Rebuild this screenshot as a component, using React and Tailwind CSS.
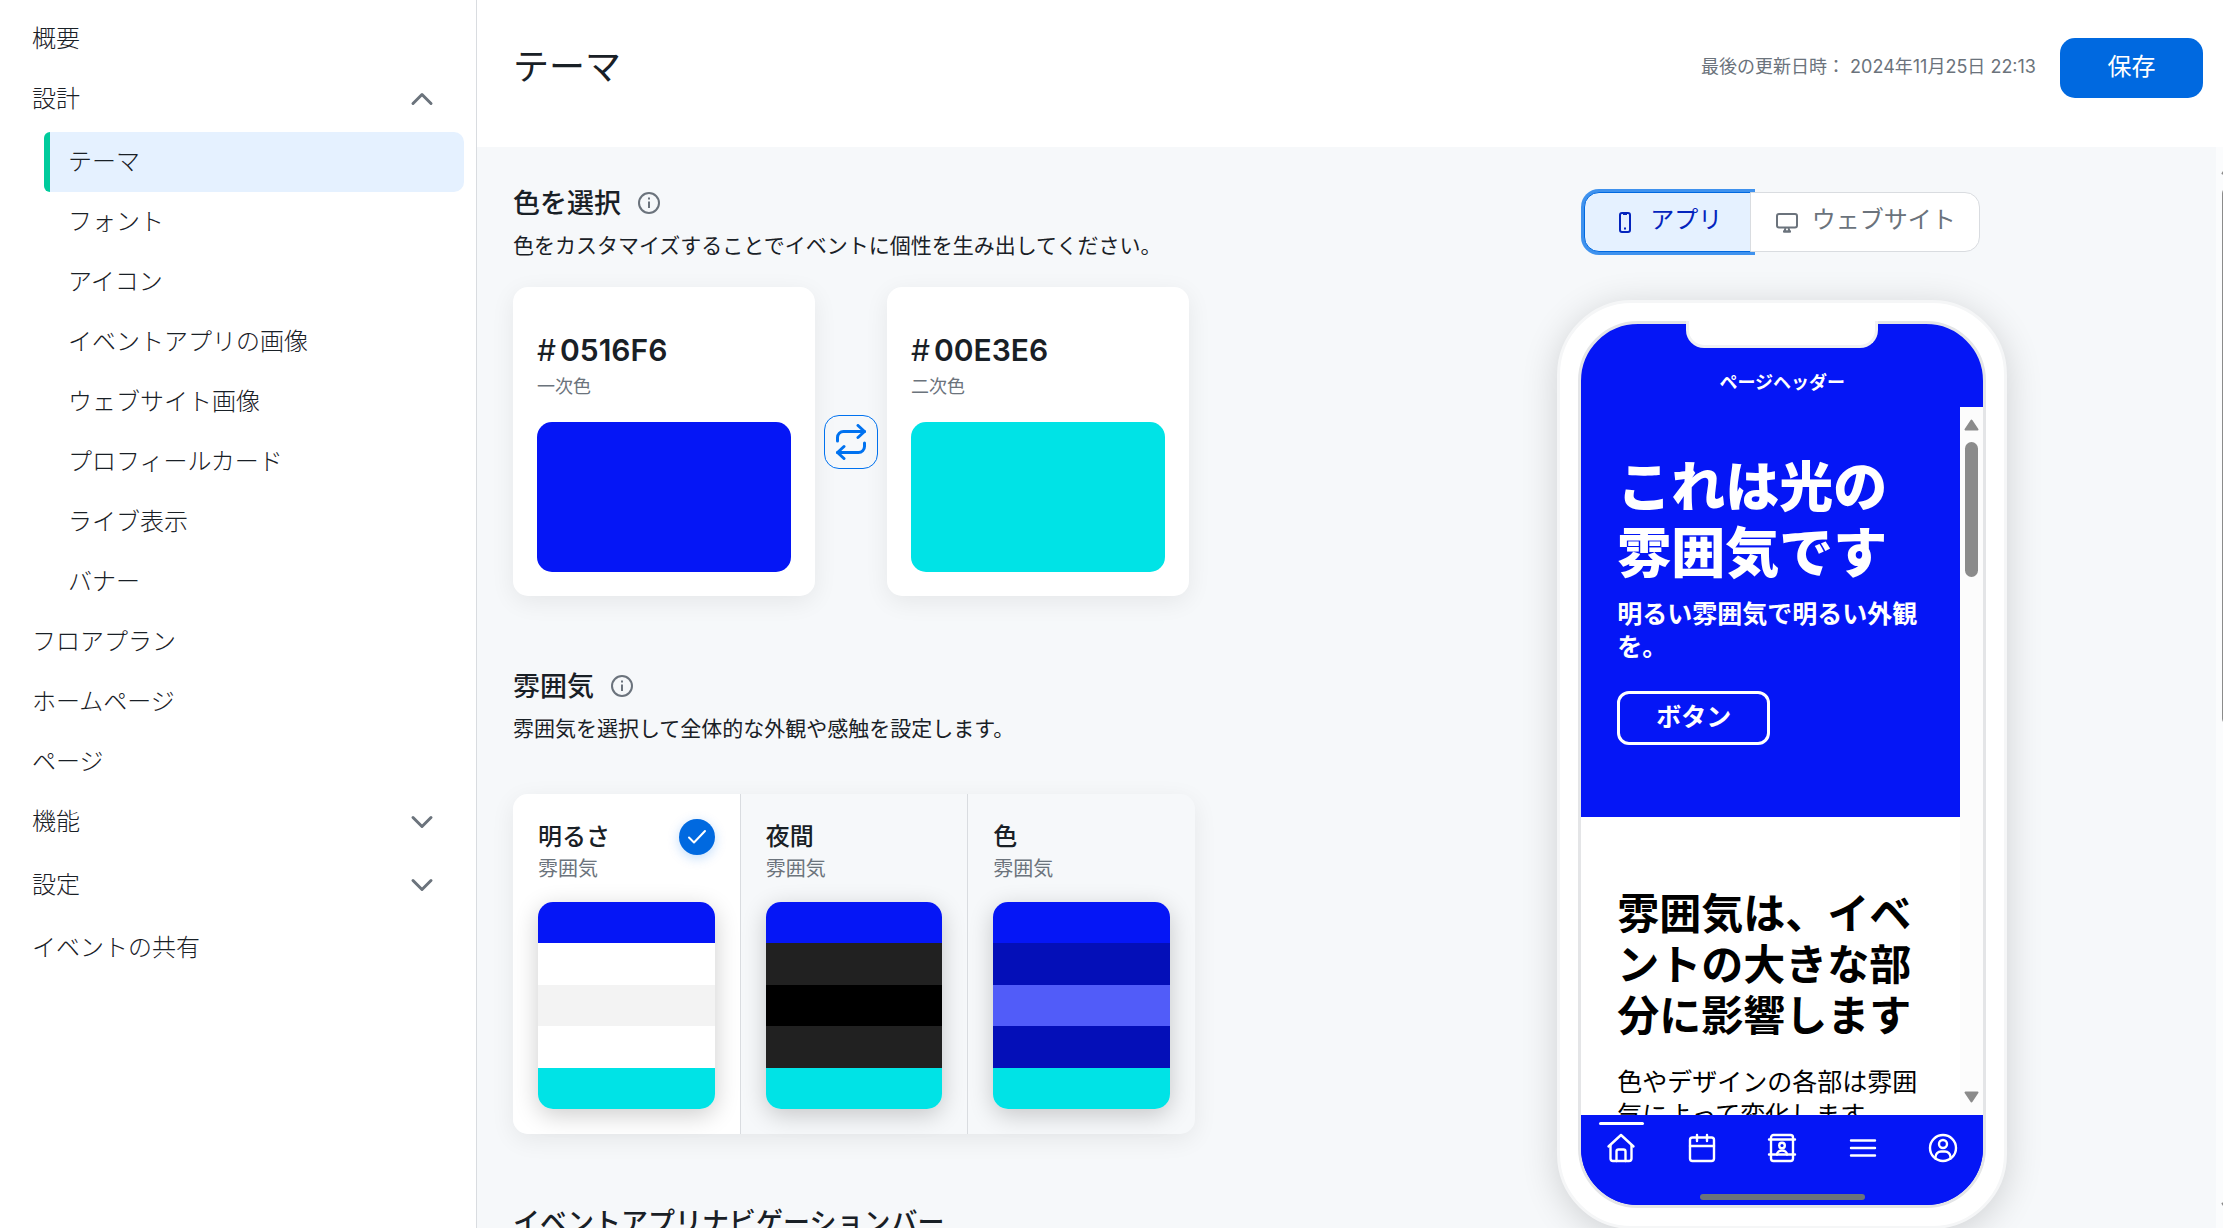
import React from "react";

const jp = "font-['Noto_Sans','Noto_Sans_CJK_JP',sans-serif]";

function Chevron({ up = false }) {
  return (
    <svg width="24" height="16" viewBox="0 0 24 16" fill="none" stroke="#6b737c" strokeWidth="3" strokeLinecap="round" strokeLinejoin="round" aria-hidden="true">
      <path d={up ? "M3 12.5 12 3.5l9 9" : "M3 3.5l9 9 9-9"} />
    </svg>
  );
}

function InfoIcon() {
  return (
    <svg width="24" height="24" viewBox="0 0 24 24" fill="none" stroke="#6b737c" strokeWidth="2" aria-hidden="true">
      <circle cx="12" cy="12" r="10" />
      <path d="M12 10.5v6.5" />
      <path d="M12 6.5v2" />
    </svg>
  );
}

function SwapIcon() {
  return (
    <svg width="34" height="36" viewBox="0 0 34 36" fill="none" stroke="#0072f0" strokeWidth="3" strokeLinecap="round" strokeLinejoin="round" aria-hidden="true">
      <path d="M3.5 17v-3.5a6 6 0 0 1 6-6h21" />
      <path d="M24 1.500l6.500 6-6.500 6" />
      <path d="M30.5 19v3.500a6 6 0 0 1-6 6h-21" />
      <path d="M10 22.500l-6.500 6 6.500 6" />
    </svg>
  );
}

const navStroke = { fill: "none", stroke: "#fff", strokeWidth: 2.4, strokeLinecap: "round", strokeLinejoin: "round" };

function HomeIcon() {
  return (
    <svg width="30" height="30" viewBox="0 0 30 30" {...navStroke} aria-hidden="true">
      <path d="M2.5 13.500 15 2l12.500 11.500" />
      <path d="M4.500 12v13.500a2.500 2.500 0 0 0 2.500 2.500h16a2.500 2.500 0 0 0 2.500-2.500V12" />
      <path d="M10.500 28v-9.500a2 2 0 0 1 2-2h5a2 2 0 0 1 2 2V28" />
    </svg>
  );
}

function CalendarIcon() {
  return (
    <svg width="30" height="30" viewBox="0 0 30 30" {...navStroke} aria-hidden="true">
      <rect x="3" y="4.5" width="24" height="23.5" rx="2.5" />
      <path d="M3 13h24M10 2v6M20 2v6" />
    </svg>
  );
}

function ContactIcon() {
  return (
    <svg width="30" height="30" viewBox="0 0 30 30" {...navStroke} aria-hidden="true">
      <rect x="4" y="2" width="22" height="26" rx="2.5" />
      <path d="M2 6.500h26M2 21.500h26" />
      <circle cx="15" cy="12.5" r="2.8" />
      <path d="M10 21.500a5 4 0 0 1 10 0" />
    </svg>
  );
}

function MenuIcon() {
  return (
    <svg width="30" height="30" viewBox="0 0 30 30" {...navStroke} aria-hidden="true">
      <path d="M3 7.500h24M3 15h24M3 22.500h24" />
    </svg>
  );
}

function ProfileIcon() {
  return (
    <svg width="30" height="30" viewBox="0 0 30 30" {...navStroke} aria-hidden="true">
      <circle cx="15" cy="15" r="13" />
      <circle cx="15" cy="11" r="4" />
      <path d="M7.500 25.500v-1.500a5.500 5.500 0 0 1 5.500-5.500h4a5.500 5.500 0 0 1 5.500 5.500v1.500" />
    </svg>
  );
}

function NavLink({ children }) {
  return (
    <li>
      <a href="#" className="flex h-[60px] items-center pb-0.5 pl-8">{children}</a>
    </li>
  );
}

function NavGroup({ children, open = false }) {
  return (
    <button type="button" aria-expanded={open} className="flex h-[63px] w-full items-center justify-between pr-[42px] pb-1 pl-8">
      <span className="pb-0.5">{children}</span>
      <Chevron up={open} />
    </button>
  );
}

const designItems = ["フォント", "アイコン", "イベントアプリの画像", "ウェブサイト画像", "プロフィールカード", "ライブ表示", "バナー"];

function Sidebar() {
  return (
    <nav className="w-[477px] shrink-0 border-r border-[#d9dce0] bg-white pt-[9px] text-2xl font-light">
      <ul>
        <NavLink>概要</NavLink>
        <li>
          <NavGroup open>設計</NavGroup>
          <ul className="pr-3 pl-11">
            <li>
              <a href="#" aria-current="page" className="flex h-[60px] items-center overflow-hidden rounded-[10px] rounded-l-md border-l-6 border-[#00cb9c] bg-[#e5f1ff] pb-0.5 pl-[18px]">テーマ</a>
            </li>
            {designItems.map((t) => (
              <li key={t}>
                <a href="#" className="flex h-[60px] items-center pb-0.5 pl-6">{t}</a>
              </li>
            ))}
          </ul>
        </li>
        <NavLink>フロアプラン</NavLink>
        <NavLink>ホームページ</NavLink>
        <NavLink>ページ</NavLink>
        <li><NavGroup>機能</NavGroup></li>
        <li><NavGroup>設定</NavGroup></li>
        <NavLink>イベントの共有</NavLink>
      </ul>
    </nav>
  );
}

function Header() {
  return (
    <header className="flex h-[147px] shrink-0 items-start justify-between bg-white pt-[38px] pr-5 pl-9">
      <h1 className="text-4xl leading-[58px]">テーマ</h1>
      <div className="flex items-center gap-6">
        <p className="pb-0.5 text-lg text-[#6b737c] font-['Inter','Noto_Sans_CJK_JP',sans-serif]">最後の更新日時： 2024年11月25日 22:13</p>
        <button type="button" className="h-[60px] w-[143px] rounded-[15px] bg-[#0069e0] pb-1 text-2xl text-white">保存</button>
      </div>
    </header>
  );
}

function ColorCard({ hex, label, swatch }) {
  return (
    <div className="flex-1 rounded-[15px] bg-white p-6 pt-[43px] shadow-[0_6px_24px_rgba(0,0,0,0.07)]">
      <p className="flex gap-1 text-3xl leading-10 font-['Inter','Noto_Sans_CJK_JP',sans-serif]">
        <span>#</span>
        <span className="font-semibold">{hex}</span>
      </p>
      <p className="mt-1 text-lg leading-6 text-[#6b737c]">{label}</p>
      <button type="button" aria-label={label} className={"mt-6 block h-[150px] w-full rounded-[15px] " + swatch} />
    </div>
  );
}

function SectionHead({ title, text }) {
  return (
    <div>
      <div className="flex items-center gap-4">
        <h2 className="text-[27px] leading-10 font-medium">{title}</h2>
        <button type="button" aria-label="情報"><InfoIcon /></button>
      </div>
      <p className="mt-1.5 text-[21px] leading-8">{text}</p>
    </div>
  );
}

const moods = [
  { name: "明るさ", stripes: ["bg-[#0516f6]", "bg-white", "bg-[#f3f3f3]", "bg-white", "bg-[#00e3e6]"] },
  { name: "夜間", stripes: ["bg-[#0516f6]", "bg-[#212121]", "bg-black", "bg-[#212121]", "bg-[#00e3e6]"] },
  { name: "色", stripes: ["bg-[#0516f6]", "bg-[#040fb8]", "bg-[#515cf9]", "bg-[#040fb8]", "bg-[#00e3e6]"] },
];

function MoodOption({ mood, selected }) {
  return (
    <label className={"flex-1 border-[#d9dce0] p-[25px] not-last:border-r first:rounded-l-[15px] " + (selected ? "bg-white" : "")}>
      <input type="radio" name="mood" defaultChecked={selected} className="sr-only" />
      <span className="flex items-start justify-between">
        <span className="block">
          <span className="block text-2xl leading-[34px] font-medium">{mood.name}</span>
          <span className="block text-xl leading-8 text-[#6b737c]">雰囲気</span>
        </span>
        {selected && (
          <span className="flex size-9 items-center justify-center rounded-full bg-[#0069e0] shadow-[0_3px_12px_rgba(0,114,240,0.25)]">
            <svg width="20" height="16" viewBox="0 0 20 16" fill="none" stroke="#fff" strokeWidth="2" strokeLinecap="round" strokeLinejoin="round" aria-hidden="true">
              <path d="M2 8.500l5 5L18 2" />
            </svg>
          </span>
        )}
      </span>
      <span className="mt-[17px] flex h-[207px] flex-col overflow-hidden rounded-[15px] shadow-[0_6px_24px_rgba(0,0,0,0.2)]">
        {mood.stripes.map((c, i) => (
          <span key={i} className={"flex-1 " + c} />
        ))}
      </span>
    </label>
  );
}

function Settings() {
  return (
    <div className="w-1/2 pt-9 pl-9">
      <div className="max-w-[682px]">
        <SectionHead title="色を選択" text="色をカスタマイズすることでイベントに個性を生み出してください。" />
        <div className="mt-[26px] mr-1.5 flex items-center gap-[9px]">
          <ColorCard hex="0516F6" label="一次色" swatch="bg-[#0516f6]" />
          <button type="button" aria-label="色を入れ替える" className="flex size-[54px] items-center justify-center rounded-[15px] border border-[#0072f0]"><SwapIcon /></button>
          <ColorCard hex="00E3E6" label="二次色" swatch="bg-[#00e3e6]" />
        </div>
        <div className="mt-[70px]">
          <SectionHead title="雰囲気" text="雰囲気を選択して全体的な外観や感触を設定します。" />
        </div>
        <div role="radiogroup" aria-label="雰囲気" className="mt-[50px] flex rounded-[15px] shadow-[0_6px_24px_rgba(0,0,0,0.07)]">
          {moods.map((m, i) => (
            <MoodOption key={m.name} mood={m} selected={i === 0} />
          ))}
        </div>
        <h2 className="mt-[68px] text-[27px] leading-10 font-medium">イベントアプリナビゲーションバー</h2>
      </div>
    </div>
  );
}

function DeviceToggle() {
  return (
    <div className="flex text-2xl">
      <button type="button" aria-pressed="true" className="flex h-[60px] w-[168px] items-center justify-center gap-[18px] rounded-l-[15px] border border-[#0069e0] bg-[#e5f1ff] pl-1 text-[#0424bd] ring-3 ring-[#3f92ee]">
        <svg width="14" height="21" viewBox="0 0 14 21" fill="none" stroke="#0424bd" strokeWidth="2" aria-hidden="true">
          <rect x="2" y="1" width="10" height="19" rx="2" />
          <path d="M5 2h4" />
          <path d="M6 16.500h2" />
        </svg>
        <span className="pb-1.5">アプリ</span>
      </button>
      <button type="button" aria-pressed="false" className="relative -ml-0.5 flex h-[60px] w-[230px] items-center justify-center gap-[13px] rounded-r-[15px] border border-[#d9dce0] bg-white text-[#6b737c]">
        <svg width="24" height="21" viewBox="0 0 24 21" fill="none" stroke="#6b737c" strokeWidth="2" strokeLinejoin="round" aria-hidden="true">
          <rect x="2" y="2" width="20" height="13.5" rx="2" />
          <path d="M10.500 16l-1 3.500h5l-1-3.500" />
          <path d="M8 19.500h8" />
        </svg>
        <span className="pb-1.5">ウェブサイト</span>
      </button>
    </div>
  );
}

function ScrollArrow({ down = false }) {
  return (
    <svg width="15" height="12" viewBox="0 0 15 12" fill="#8b8b8b" stroke="#8b8b8b" strokeWidth="2" strokeLinejoin="round" className="shrink-0" aria-hidden="true">
      <path d={down ? "M1.500 1.500h12l-6 9z" : "M1.500 10.500h12l-6-9z"} />
    </svg>
  );
}

const tabs = [
  { name: "ホーム", Icon: HomeIcon },
  { name: "予定", Icon: CalendarIcon },
  { name: "連絡先", Icon: ContactIcon },
  { name: "メニュー", Icon: MenuIcon },
  { name: "プロフィール", Icon: ProfileIcon },
];

function Phone() {
  return (
    <div className="mt-12 w-[450px] shrink-0 rounded-[75px] border-3 border-[#f5f6f7] bg-white p-[18px] shadow-[0_6px_36px_rgba(0,0,0,0.16)]">
      <div className="flex h-[887px] flex-col overflow-hidden rounded-[60px] border-3 border-[#e4e5e7] bg-[#0516f6]">
        <div className="flex h-[83px] shrink-0 items-center justify-center pt-8 text-lg font-bold text-white">ページヘッダー</div>
        <div className="flex min-h-0 flex-1 bg-white">
          <div className="min-w-0 flex-1 overflow-hidden">
            <div className="h-[410px] bg-[#0516f6] px-9 pt-[46px] text-white">
              <h3 className="text-[54px] leading-[66px] font-black">これは光の雰囲気です</h3>
              <p className="mt-3 text-[25px] leading-[33px] font-bold">明るい雰囲気で明るい外観を。</p>
              <button type="button" className="mt-7 h-[54px] w-[153px] rounded-xl border-3 border-white pb-1 text-[25px] leading-8 font-bold">ボタン</button>
            </div>
            <div className="px-9 pt-[70px] text-black">
              <h3 className="text-[42px] leading-[51px] font-bold">雰囲気は、イベントの大きな部分に影響します</h3>
              <p className="mt-[25px] text-[25px] leading-[33px]">色やデザインの各部は雰囲気によって変化します。</p>
            </div>
          </div>
          <div className="flex w-[23px] flex-col items-center justify-between bg-[#fcfcfc] py-3">
            <div className="flex flex-col items-center gap-[11px]">
              <ScrollArrow />
              <div className="h-[135px] w-[13px] rounded-full bg-[#8b8b8b]" />
            </div>
            <ScrollArrow down />
          </div>
        </div>
        <div className="flex h-[90px] shrink-0 flex-col items-center justify-between bg-[#0516f6] pt-[7px] pb-[5px]">
          <div className="flex w-full">
            {tabs.map(({ name, Icon }, i) => (
              <button key={name} type="button" aria-label={name} className="flex flex-1 flex-col items-center gap-2">
                <span className={"h-[3px] w-[45px] rounded-full " + (i === 0 ? "bg-white" : "")} />
                <Icon />
              </button>
            ))}
          </div>
          <div className="h-1.5 w-[165px] rounded-full bg-[#6b737c]" />
        </div>
      </div>
    </div>
  );
}

function Preview() {
  return (
    <div className="flex w-1/2 flex-col items-center pt-[45px] pl-0.5">
      <DeviceToggle />
      <div className="relative flex justify-center">
        <Phone />
        <div className="absolute top-[69px] h-[27px] w-48 rounded-b-[18px] border-x-3 border-b-3 border-[#f0f1f3] bg-white" />
      </div>
    </div>
  );
}

export default function App() {
  return (
    <div className={"flex h-screen overflow-hidden bg-[#f6f8fa] text-[#192026] " + jp} lang="ja">
      <Sidebar />
      <main className="flex min-w-0 flex-1 flex-col">
        <Header />
        <div className="flex min-h-0 flex-1">
          <div className="flex min-w-0 flex-1 overflow-hidden">
            <Settings />
            <Preview />
          </div>
          <div className="flex w-[7px] flex-col items-start justify-between overflow-hidden bg-[#fbfcfd] pt-4 pb-3.5 pl-[5px]">
            <div className="flex flex-col gap-3">
              <ScrollArrow />
              <div className="ml-px h-[538px] w-[13px] rounded-full bg-[#8b8b8b]" />
            </div>
            <ScrollArrow down />
          </div>
        </div>
      </main>
    </div>
  );
}
